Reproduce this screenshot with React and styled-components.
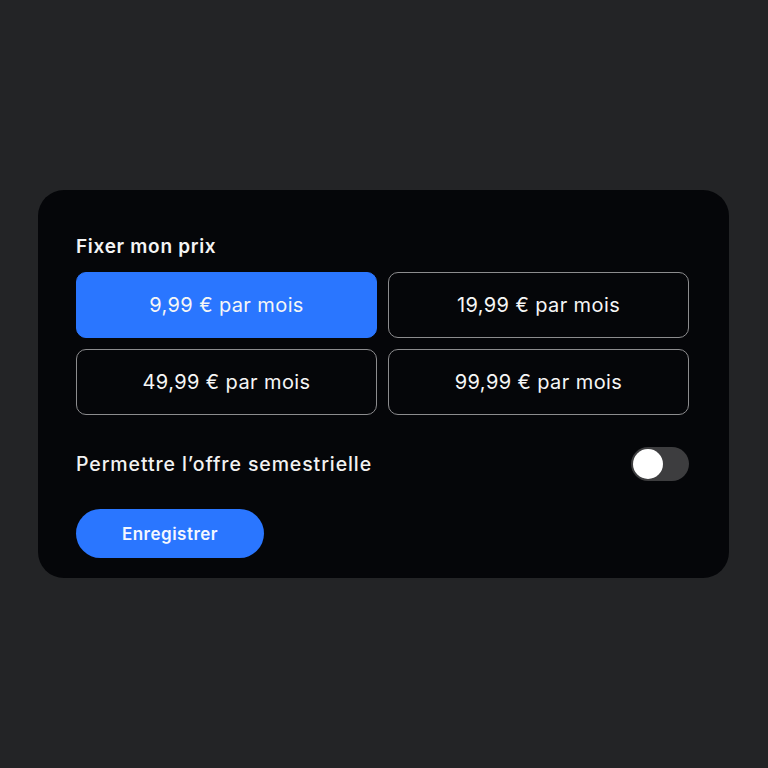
import React, { useState } from "react";
import styled, { createGlobalStyle } from "styled-components";

const Global = createGlobalStyle`
  html, body { margin: 0; padding: 0; background: #232426; }
  body { font-family: Inter, "Noto Sans", sans-serif; }
`;

const Page = styled.div`
  width: 768px;
  height: 768px;
  box-sizing: border-box;
  padding: 190px 0 0 38px;
`;

const Card = styled.div`
  width: 691px;
  height: 388px;
  box-sizing: border-box;
  background: #050609;
  border-radius: 26px;
  padding: 46px 40px 20px 38px;
  display: flex;
  flex-direction: column;
`;

const Title = styled.div`
  color: #f4f4f4;
  font-size: 19px;
  font-weight: 600;
  line-height: 22px;
  letter-spacing: 0.7px;
`;

const Grid = styled.div`
  margin-top: 14px;
  display: grid;
  grid-template-columns: 301px 301px;
  column-gap: 11px;
  row-gap: 11px;
`;

const PriceButton = styled.button`
  height: 66px;
  box-sizing: border-box;
  border-radius: 10px;
  border: ${(p) => (p.$active ? "1.5px solid #2a76ff" : "1.5px solid #8c8c8e")};
  background: ${(p) => (p.$active ? "#2a76ff" : "transparent")};
  color: #f6f6f6;
  font-family: Inter, "Noto Sans", sans-serif;
  font-size: 20px;
  font-weight: 400;
  letter-spacing: 0.4px;
  cursor: pointer;
  display: flex;
  align-items: center;
  justify-content: center;
  padding: 0;
`;

const ToggleRow = styled.div`
  margin-top: 32px;
  display: flex;
  align-items: center;
  justify-content: space-between;
`;

const Label = styled.div`
  color: #f2f2f2;
  font-size: 19.5px;
  font-weight: 500;
  letter-spacing: 0.9px;
`;

const Track = styled.button`
  width: 58px;
  height: 34px;
  border-radius: 17px;
  border: none;
  padding: 2px;
  box-sizing: border-box;
  background: ${(p) => (p.$on ? "#2a76ff" : "#3d3d3f")};
  display: flex;
  justify-content: ${(p) => (p.$on ? "flex-end" : "flex-start")};
  align-items: center;
  cursor: pointer;
`;

const Knob = styled.span`
  width: 30px;
  height: 30px;
  border-radius: 50%;
  background: #ffffff;
  display: block;
`;

const Save = styled.button`
  margin-top: 28px;
  width: 188px;
  height: 49px;
  border-radius: 25px;
  border: none;
  background: #2a76ff;
  color: #f4f7ff;
  font-family: Inter, "Noto Sans", sans-serif;
  font-size: 17px;
  font-weight: 600;
  letter-spacing: 0.5px;
  cursor: pointer;
`;

const prices = ["9,99", "19,99", "49,99", "99,99"];

export default function App() {
  const [sel, setSel] = useState(0);
  const [on, setOn] = useState(false);
  return (
    <Page>
      <Global />
      <Card>
        <Title>Fixer mon prix</Title>
        <Grid>
          {prices.map((p, i) => (
            <PriceButton key={p} $active={sel === i} onClick={() => setSel(i)}>
              {p} € par mois
            </PriceButton>
          ))}
        </Grid>
        <ToggleRow>
          <Label>Permettre l’offre semestrielle</Label>
          <Track $on={on} onClick={() => setOn(!on)}>
            <Knob />
          </Track>
        </ToggleRow>
        <Save>Enregistrer</Save>
      </Card>
    </Page>
  );
}
